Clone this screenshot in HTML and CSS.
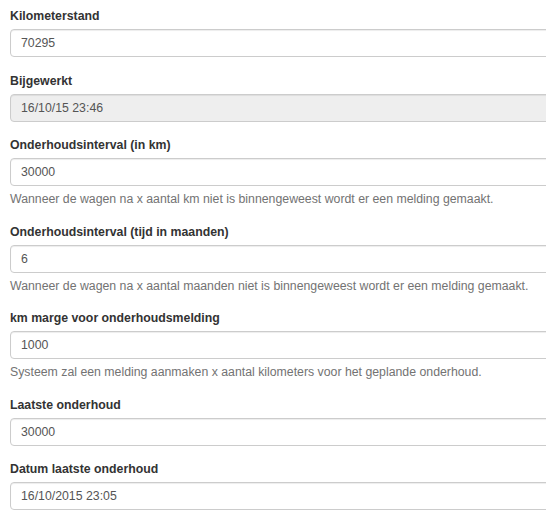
FILE: index.html
```html
<!DOCTYPE html>
<html lang="nl">
<head>
<meta charset="utf-8">
<title>Onderhoud</title>
<link rel="stylesheet" href="styles.css">
</head>
<body>
<div class="page">
  <form class="form">
    <div class="form-group">
      <label class="control-label">Kilometerstand</label>
      <input class="form-control" type="text" value="70295">
    </div>
    <div class="form-group">
      <label class="control-label">Bijgewerkt</label>
      <input class="form-control" type="text" value="16/10/15 23:46" disabled>
    </div>
    <div class="form-group">
      <label class="control-label">Onderhoudsinterval (in km)</label>
      <input class="form-control" type="text" value="30000">
      <span class="help-block">Wanneer de wagen na x aantal km niet is binnengeweest wordt er een melding gemaakt.</span>
    </div>
    <div class="form-group">
      <label class="control-label">Onderhoudsinterval (tijd in maanden)</label>
      <input class="form-control" type="text" value="6">
      <span class="help-block">Wanneer de wagen na x aantal maanden niet is binnengeweest wordt er een melding gemaakt.</span>
    </div>
    <div class="form-group">
      <label class="control-label">km marge voor onderhoudsmelding</label>
      <input class="form-control" type="text" value="1000">
      <span class="help-block">Systeem zal een melding aanmaken x aantal kilometers voor het geplande onderhoud.</span>
    </div>
    <div class="form-group">
      <label class="control-label">Laatste onderhoud</label>
      <input class="form-control" type="text" value="30000">
    </div>
    <div class="form-group">
      <label class="control-label">Datum laatste onderhoud</label>
      <input class="form-control" type="text" value="16/10/2015 23:05">
    </div>
  </form>
</div>
</body>
</html>
```

FILE: styles.css
```css
html, body {
  margin: 0;
  padding: 0;
  background: #fff;
}

body {
  font-family: "Liberation Sans", Arial, Helvetica, sans-serif;
  font-size: 12.3px;
  color: #333;
  overflow: hidden;
}

.page {
  width: 546px;
  height: 528px;
  overflow: hidden;
  padding: 8px 0 0 10px;
  box-sizing: border-box;
}

.form {
  width: 600px;
}

.form-group {
  margin-bottom: 15.5px;
}

.control-label {
  display: block;
  font-weight: bold;
  line-height: 17px;
  margin-bottom: 4px;
}

.form-control {
  display: block;
  box-sizing: border-box;
  width: 600px;
  height: 28px;
  margin: 0;
  padding: 0 10px;
  font-family: "Liberation Sans", Arial, Helvetica, sans-serif;
  font-size: 12.3px;
  color: #555;
  background: #fff;
  border: 1px solid #ccc;
  border-radius: 4px;
  box-shadow: inset 0 1px 1px rgba(0, 0, 0, 0.075);
  outline: none;
}

.form-control:disabled {
  background: #eee;
  color: #555;
  opacity: 1;
}

.help-block {
  display: block;
  margin-top: 5px;
  line-height: 17px;
  color: #737373;
}
```
